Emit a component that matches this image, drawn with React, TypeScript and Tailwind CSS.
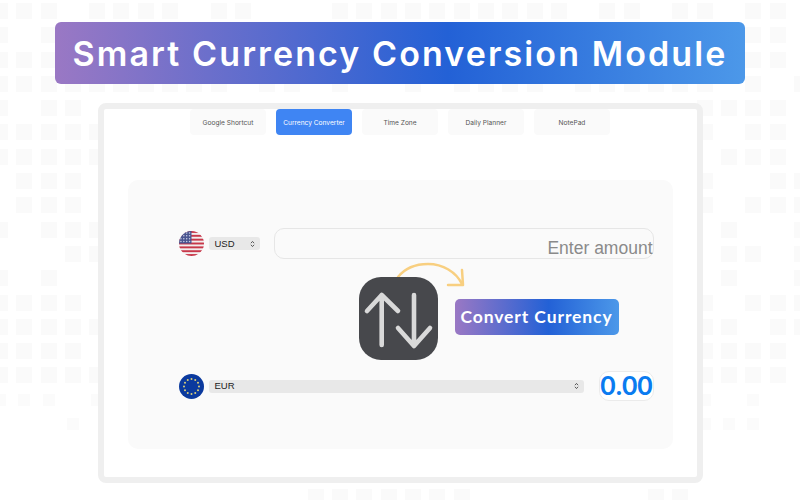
// Faint squares behind the page: filled column numbers, row by row
const bgRows: number[][] = [
  [0, 1, 2, 4, 5, 6, 7, 9, 10, 14, 15, 16, 17, 18, 19, 20, 21, 22, 23, 25, 26, 28, 29, 31, 32],
  [0, 2, 31, 32],
  [0, 1, 2, 31, 32],
  [0, 1, 2, 3, 4, 5, 6, 7, 8, 9, 11, 12, 14, 17, 19, 20, 21, 22, 24, 25, 26, 27, 28, 29, 31, 33],
  [0, 2, 3, 29, 30, 31, 32],
  [0, 1, 2, 3, 4, 29, 31, 32],
  [0, 1, 2, 3, 4, 30, 31, 32],
  [1, 2, 3, 29, 32, 33],
  [1, 2, 3, 29, 31, 32, 33],
  [0, 2, 3, 4, 30, 33],
  [3, 4, 30, 31, 33],
  [0, 2, 30, 33],
  [0, 1, 2, 3, 29, 31, 32, 33],
  [0, 1, 2, 3, 4, 29, 30, 32, 33],
  [0, 1, 2, 3, 29, 30, 31, 32],
  [0, 1, 2, 3, 4, 29, 30, 31, 32],
  [0, 1, 2, 4, 29, 31],
  [3, 29, 30, 31],
  [],
  [],
  [13, 14, 15, 16, 17, 18, 19, 27, 28],
];

const stops = "bg-[linear-gradient(90deg,#9a78c4_0%,#2361d6_57%,#4c98e9_100%)]";

const tabs = ["Google Shortcut", "Currency Converter", "Time Zone", "Daily Planner", "NotePad"];

function BgPattern() {
  return (
    <div aria-hidden className="absolute left-[-8px] top-[3px] flex flex-col gap-[8.3px]">
      {bgRows.map((row, i) => (
        <div key={i} className="flex gap-[8.3px]">
          {Array.from({ length: 34 }, (_, j) => (
            <div
              key={j}
              className={
                !row.includes(j)
                  ? "h-4 w-4"
                  : i >= 16 && i < 20
                    ? "h-4 w-4 scale-75 bg-[#fbfbfb]"
                    : "h-4 w-4 bg-[#fafafa]"
              }
            />
          ))}
        </div>
      ))}
    </div>
  );
}

function UsFlag() {
  return (
    <svg viewBox="0 0 26 26" className="h-[25px] w-[25px] shrink-0">
      <defs>
        <clipPath id="us">
          <circle cx="13" cy="13" r="13" />
        </clipPath>
      </defs>
      <g clipPath="url(#us)">
        <rect width="26" height="26" fill="#f2eeee" />
        {[1, 5, 9, 13, 17, 21, 25].map((y) => (
          <rect key={y} x="0" y={y - 1} width="26" height="2" fill="#c8384a" />
        ))}
        <rect width="13" height="13" fill="#4a5590" />
        <g fill="#c9cde4">
          {[2, 5, 8, 11].map((y) =>
            [2, 5, 8, 11].map((x) => <circle key={x + "-" + y} cx={x} cy={y} r="0.8" />),
          )}
        </g>
      </g>
    </svg>
  );
}

function EuFlag() {
  const stars = Array.from({ length: 12 }, (_, i) => (i * Math.PI) / 6);
  return (
    <svg viewBox="0 0 26 26" className="h-[25px] w-[25px] shrink-0">
      <circle cx="13" cy="13" r="13" fill="#0b3a9e" />
      {stars.map((a, i) => (
        <circle key={i} cx={13 + 7.8 * Math.cos(a)} cy={13 + 7.8 * Math.sin(a)} r="1.05" fill="#d9cf7a" />
      ))}
    </svg>
  );
}

function Chevrons() {
  return (
    <svg viewBox="0 0 6 10" className="h-[8px] w-[5px] shrink-0" fill="none" stroke="#444" strokeWidth="1.1">
      <path d="M1 4 3 1.8 5 4M1 6 3 8.2 5 6" />
    </svg>
  );
}

function SwapIcon() {
  return (
    <svg viewBox="0 0 79 83" className="h-[83px] w-[79px]" fill="none" stroke="#d9d9d9" strokeWidth="4.6" strokeLinecap="round" strokeLinejoin="round">
      <path d="M22.7 68V18M8 34 22.7 18 39 34" />
      <path d="M55 18V69M39 51 55 69 71 51" />
    </svg>
  );
}

export default function App() {
  return (
    <div className="relative h-[500px] w-[800px] overflow-hidden bg-white font-['Inter',sans-serif]">
      <BgPattern />
      <div className="relative flex flex-col items-center pt-[22px]">
        <div className={`flex h-[62px] w-[690px] items-center justify-center rounded-[6px] ${stops}`}>
          <h1 className="text-[34px] font-semibold tracking-[2.1px] text-white">Smart Currency Conversion Module</h1>
        </div>

        <div className="mt-[19px] h-[380px] w-[605px] shrink-0 rounded-[8px] border-[6px] border-[#efefef] bg-white">
          <div className="flex justify-center gap-[10px]">
            {tabs.map((t, i) => (
              <div
                key={t}
                className={
                  i === 1
                    ? "flex h-[26px] w-[76px] items-center justify-center rounded-[4px] bg-[#3f85f3] pt-[3px] text-[6.6px] text-white"
                    : "flex h-[26px] w-[76px] items-center justify-center rounded-[4px] bg-[#fafafa] pt-[3px] text-[6.6px] text-[#555555]"
                }
              >
                {t}
              </div>
            ))}
          </div>

          <div className="mx-[24px] mt-[45px] flex h-[269px] flex-col rounded-[10px] bg-[#fafafa] pl-[51px] pr-[19px] pt-[48px]">
            <div className="flex items-center">
              <UsFlag />
              <div className="ml-[5px] flex h-[13px] w-[51px] shrink-0 items-center justify-between rounded-[3px] bg-[#e8e8e8] pl-[6px] pr-[5px] font-['Liberation_Sans',sans-serif] text-[9.5px] leading-none text-[#222222]">
                USD
                <Chevrons />
              </div>
              <div className="ml-[14px] flex h-[31px] w-[380px] shrink-0 items-end justify-end rounded-[10px] border border-[#e6e6e6] font-['Liberation_Sans',sans-serif] text-[17.5px] leading-[19px] text-[#8a8a8a]">
                Enter amount
              </div>
            </div>

            <div className="relative mt-[18px] flex h-[83px] items-start pl-[180px]">
              <svg
                viewBox="0 0 72 26"
                className="absolute left-[217px] top-[-15px] h-[26px] w-[72px]"
                fill="none"
                stroke="#f8cf80"
                strokeWidth="2.5"
                strokeLinecap="round"
                strokeLinejoin="round"
              >
                <path d="M2 15C10 5 22 2 32 2 47 2 60 10 66 22M66 8 67 23 52 23" />
              </svg>
              <div className="relative flex h-[83px] w-[79px] shrink-0 items-center justify-center rounded-[22px] bg-[#47484c]">
                <SwapIcon />
              </div>
              <div className={`ml-[17px] mt-[22px] flex h-[36px] w-[164px] shrink-0 items-center justify-center rounded-[5px] font-['Lato',sans-serif] text-[17.5px] font-bold tracking-[0.9px] text-white ${stops}`}>
                Convert Currency
              </div>
            </div>

            <div className="mt-[11px] flex items-center">
              <EuFlag />
              <div className="ml-[5px] flex h-[13px] w-[375px] shrink-0 items-center justify-between rounded-[3px] bg-[#e8e8e8] pl-[6px] pr-[5px] font-['Liberation_Sans',sans-serif] text-[9.5px] leading-none text-[#222222]">
                EUR
                <Chevrons />
              </div>
              <div className="ml-[15px] flex h-[30px] w-[55px] shrink-0 items-center justify-center rounded-[10px] border border-[#ebebeb] bg-white pl-px font-['Lato',sans-serif] text-[26.5px] font-bold text-[#0a7bf0]">
                0.00
              </div>
            </div>
          </div>
        </div>
      </div>
    </div>
  );
}
